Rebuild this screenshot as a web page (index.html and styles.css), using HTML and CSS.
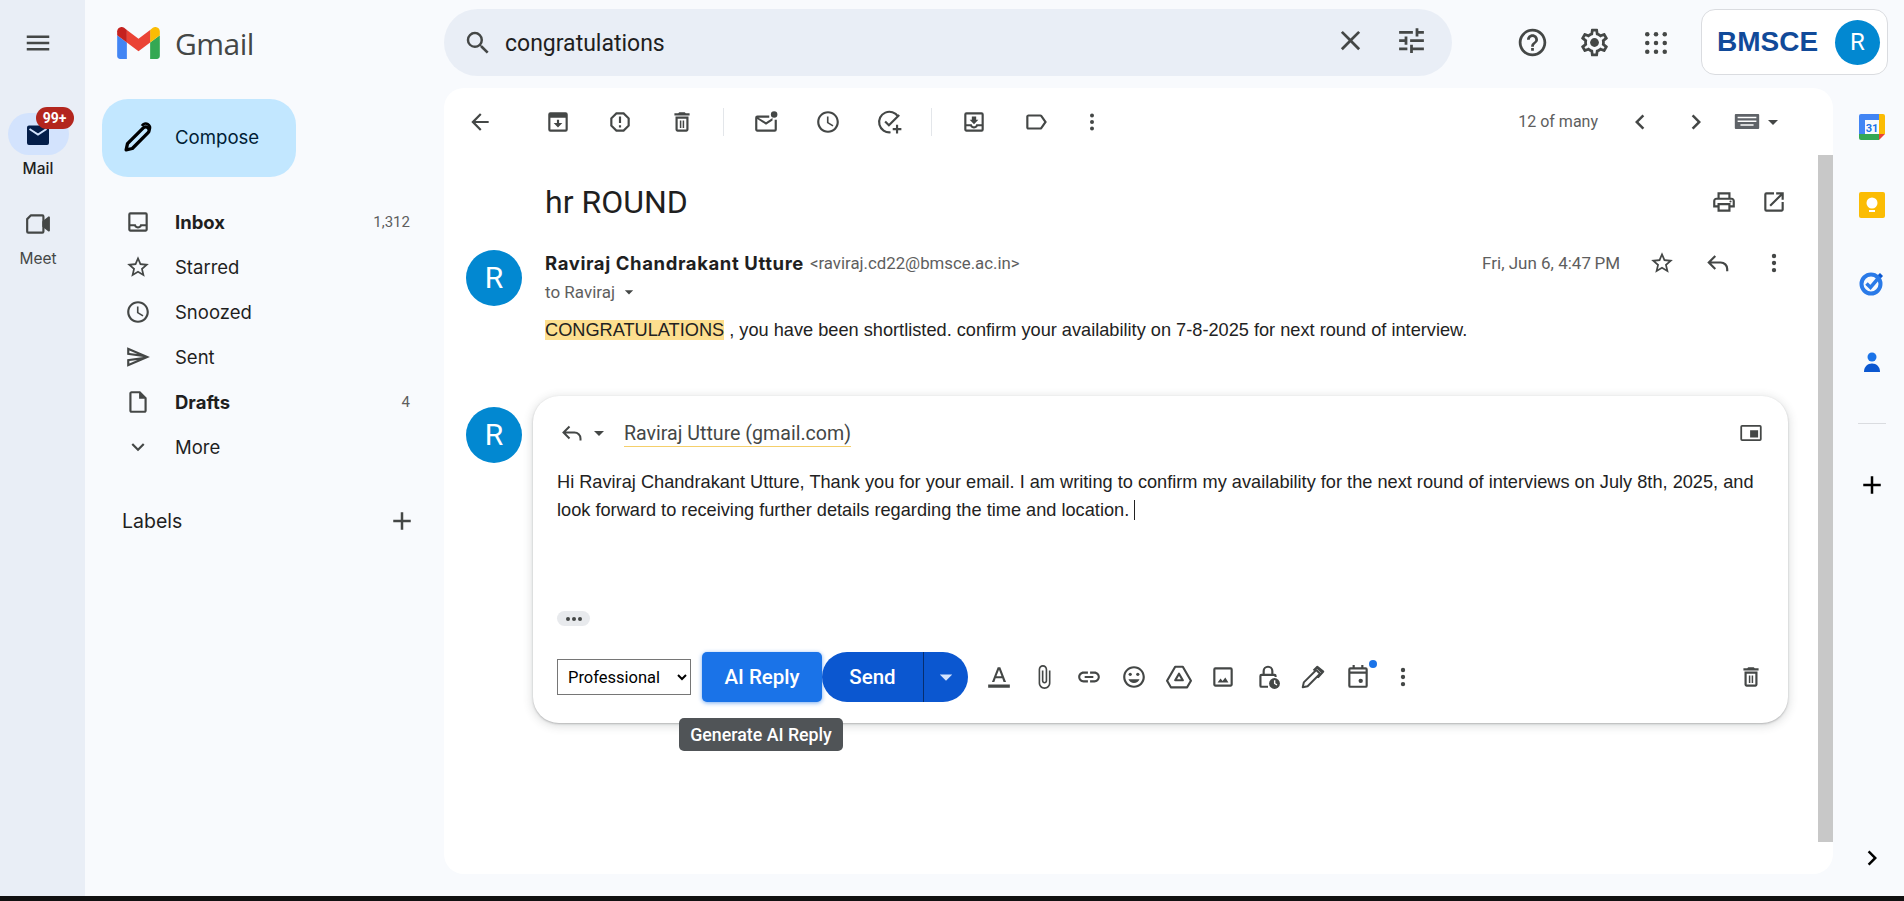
FILE: index.html
```html
<!DOCTYPE html>
<html lang="en">
<head>
    <meta charset="UTF-8">
    <title>hr ROUND - Gmail</title>
    <link rel="stylesheet" href="styles.css">
</head>
<body>
    <!-- icon sprite -->
    <svg class="sprite" xmlns="http://www.w3.org/2000/svg">
        <symbol id="i-menu" viewBox="0 0 24 24"><path d="M3 18h18v-2H3v2zm0-5h18v-2H3v2zm0-7v2h18V6H3z"/></symbol>
        <symbol id="i-search" viewBox="0 0 24 24"><path d="M15.5 14h-.79l-.28-.27A6.471 6.471 0 0 0 16 9.5 6.5 6.5 0 1 0 9.5 16c1.61 0 3.09-.59 4.23-1.57l.27.28v.79l5 4.99L20.49 19l-4.99-5zm-6 0C7.01 14 5 11.99 5 9.5S7.01 5 9.5 5 14 7.01 14 9.5 11.99 14 9.5 14z"/></symbol>
        <symbol id="i-close" viewBox="0 0 24 24"><path d="M19 6.41 17.59 5 12 10.59 6.41 5 5 6.41 10.59 12 5 17.59 6.41 19 12 13.41 17.59 19 19 17.59 13.41 12z"/></symbol>
        <symbol id="i-tune" viewBox="0 0 24 24"><path d="M3 17v2h6v-2H3zM3 5v2h10V5H3zm10 16v-2h8v-2h-8v-2h-2v6h2zM7 9v2H3v2h4v2h2V9H7zm14 4v-2H11v2h10zm-6-4h2V7h4V5h-4V3h-2v6z"/></symbol>
        <symbol id="i-help" viewBox="0 0 24 24"><path d="M11 18h2v-2h-2v2zm1-16C6.48 2 2 6.48 2 12s4.48 10 10 10 10-4.48 10-10S17.52 2 12 2zm0 18c-4.41 0-8-3.59-8-8s3.59-8 8-8 8 3.59 8 8-3.59 8-8 8zm0-14c-2.21 0-4 1.79-4 4h2c0-1.1.9-2 2-2s2 .9 2 2c0 2-3 1.75-3 5h2c0-2.25 3-2.5 3-5 0-2.21-1.79-4-4-4z"/></symbol>
        <symbol id="i-gear" viewBox="0 0 24 24"><path d="M19.43 12.98c.04-.32.07-.64.07-.98 0-.34-.03-.66-.07-.98l2.11-1.65c.19-.15.24-.42.12-.64l-2-3.46c-.09-.16-.26-.25-.44-.25-.06 0-.12.01-.17.03l-2.49 1c-.52-.4-1.08-.73-1.69-.98l-.38-2.65C14.46 2.18 14.25 2 14 2h-4c-.25 0-.46.18-.49.42l-.38 2.65c-.61.25-1.17.59-1.69.98l-2.49-1c-.06-.02-.12-.03-.18-.03-.17 0-.34.09-.43.25l-2 3.46c-.13.22-.07.49.12.64l2.11 1.65c-.04.32-.07.65-.07.98 0 .33.03.66.07.98l-2.11 1.65c-.19.15-.24.42-.12.64l2 3.46c.09.16.26.25.44.25.06 0 .12-.01.17-.03l2.49-1c.52.4 1.08.73 1.69.98l.38 2.65c.03.24.24.42.49.42h4c.25 0 .46-.18.49-.42l.38-2.65c.61-.25 1.17-.59 1.69-.98l2.49 1c.06.02.12.03.18.03.17 0 .34-.09.43-.25l2-3.46c.12-.22.07-.49-.12-.64l-2.11-1.65zm-1.98-1.71c.04.31.05.52.05.73 0 .21-.02.43-.05.73l-.14 1.13.89.7 1.08.84-.7 1.21-1.27-.51-1.04-.42-.9.68c-.43.32-.84.56-1.25.73l-1.06.43-.16 1.13-.2 1.35h-1.4l-.19-1.35-.16-1.13-1.06-.43c-.43-.18-.83-.41-1.23-.71l-.91-.7-1.06.43-1.27.51-.7-1.21 1.08-.84.89-.7-.14-1.13c-.03-.31-.05-.54-.05-.74s.02-.43.05-.73l.14-1.13-.89-.7-1.08-.84.7-1.21 1.27.51 1.04.42.9-.68c.43-.32.84-.56 1.25-.73l1.06-.43.16-1.13.2-1.35h1.39l.19 1.35.16 1.13 1.06.43c.43.18.83.41 1.23.71l.91.7 1.06-.43 1.27-.51.7 1.21-1.07.85-.89.7.14 1.13z"/><circle cx="12" cy="12" r="3.2"/></symbol>
        <symbol id="i-apps" viewBox="0 0 24 24"><circle cx="5" cy="5" r="1.800"/><circle cx="12" cy="5" r="1.800"/><circle cx="19" cy="5" r="1.800"/><circle cx="5" cy="12" r="1.800"/><circle cx="12" cy="12" r="1.800"/><circle cx="19" cy="12" r="1.800"/><circle cx="5" cy="19" r="1.800"/><circle cx="12" cy="19" r="1.800"/><circle cx="19" cy="19" r="1.800"/></symbol>
        <symbol id="i-back" viewBox="0 0 24 24"><path d="M20 11H7.83l5.59-5.59L12 4 4 12l8 8 1.41-1.41L7.83 13H20v-2z"/></symbol>
        <symbol id="i-archive" viewBox="0 0 24 24"><path d="M5 3h14a2 2 0 0 1 2 2v14a2 2 0 0 1-2 2H5a2 2 0 0 1-2-2V5a2 2 0 0 1 2-2zm0 5v11h14V8H5zm6 2h2v3h3l-4 4-4-4h3v-3z"/></symbol>
        <symbol id="i-spam" viewBox="0 0 24 24"><path d="M15.73 3H8.27L3 8.27v7.46L8.27 21h7.46L21 15.73V8.27L15.73 3zM19 14.9 14.9 19H9.1L5 14.9V9.1L9.1 5h5.8L19 9.1v5.8zM11 7h2v6h-2zM11 15h2v2h-2z"/></symbol>
        <symbol id="i-trash" viewBox="0 0 24 24"><path d="M6 19c0 1.1.9 2 2 2h8c1.1 0 2-.9 2-2V7H6v12zM8 9h8v10H8V9zm7.5-5-1-1h-5l-1 1H5v2h14V4zM10 10.500h1.400v7H10zM12.600 10.500H14v7h-1.400z"/></symbol>
        <symbol id="i-unread" viewBox="0 0 24 24"><path d="M15 6H4a2 2 0 0 0-2 2v11c0 1.100.9 2 2 2h16a2 2 0 0 0 2-2v-9h-2v9H4V9.300l8 5.200 6-3.900V8.300l-6 3.900L5 8h10z"/><circle cx="19.500" cy="5" r="3"/></symbol>
        <symbol id="i-clock" viewBox="0 0 24 24"><path d="M11.99 2C6.47 2 2 6.48 2 12s4.47 10 9.990 10C17.520 22 22 17.520 22 12S17.520 2 11.990 2zM12 20c-4.420 0-8-3.580-8-8s3.580-8 8-8 8 3.580 8 8-3.580 8-8 8zm.5-13H11v6l5.250 3.150.75-1.230-4.500-2.670z"/></symbol>
        <symbol id="i-task" viewBox="0 0 24 24" fill="none" stroke="currentColor" stroke-width="2"><path d="M19.500 7A9.500 9.500 0 1 0 12.500 21.500M7.500 11.500l3.500 3.500 9.500-9.500M18.500 14.500v8M14.500 18.500h8"/></symbol>
        <symbol id="i-move" viewBox="0 0 24 24"><path d="M19 3H5a2 2 0 0 0-2 2v14c0 1.100.9 2 2 2h14a2 2 0 0 0 2-2V5a2 2 0 0 0-2-2zm0 16H5v-3h3.560c.69 1.190 1.970 2 3.440 2s2.750-.81 3.440-2H19v3zm0-5h-4.990c0 1.100-.9 2-2 2s-2-.9-2-2H5V5h14v9zM16 10h-2V7h-4v3H8l4 4z"/></symbol>
        <symbol id="i-label" viewBox="0 0 24 24"><path d="M17.630 5.840C17.270 5.330 16.670 5 16 5L5 5.010C3.900 5.010 3 5.900 3 7v10c0 1.100.9 1.990 2 1.990L16 19c.67 0 1.270-.33 1.630-.84L22 12l-4.370-6.160zM16 17H5V7h11l3.550 5L16 17z"/></symbol>
        <symbol id="i-more" viewBox="0 0 24 24"><circle cx="12" cy="5.500" r="2"/><circle cx="12" cy="12" r="2"/><circle cx="12" cy="18.500" r="2"/></symbol>
        <symbol id="i-prev" viewBox="0 0 24 24"><path d="M15.410 7.410 14 6l-6 6 6 6 1.410-1.410L10.830 12z"/></symbol>
        <symbol id="i-next" viewBox="0 0 24 24"><path d="M10 6 8.590 7.410 13.170 12l-4.580 4.590L10 18l6-6z"/></symbol>
        <symbol id="i-caret" viewBox="0 0 24 24"><path d="M7 10l5 5 5-5z"/></symbol>
        <symbol id="i-keyboard" viewBox="0 0 26 16"><path d="M1 0h24a1 1 0 0 1 1 1v14a1 1 0 0 1-1 1H1a1 1 0 0 1-1-1V1a1 1 0 0 1 1-1zm2 3v1.500h20V3zm0 4v1.500h20V7zm3 4v1.500h14V11z"/></symbol>
        <symbol id="i-print" viewBox="0 0 24 24"><path d="M19 8h-1V3H6v5H5c-1.660 0-3 1.340-3 3v6h4v4h12v-4h4v-6c0-1.660-1.340-3-3-3zM8 5h8v3H8V5zm8 12v2H8v-4h8v2zm2-2v-2H6v2H4v-4c0-.55.45-1 1-1h14c.55 0 1 .45 1 1v4h-2z"/><circle cx="18" cy="11.500" r="1"/></symbol>
        <symbol id="i-open" viewBox="0 0 24 24"><path d="M19 19H5V5h7V3H5a2 2 0 0 0-2 2v14a2 2 0 0 0 2 2h14c1.100 0 2-.9 2-2v-7h-2v7zM14 3v2h3.590l-9.830 9.830 1.410 1.410L19 6.410V10h2V3h-7z"/></symbol>
        <symbol id="i-star" viewBox="0 0 24 24"><path d="M22 9.240l-7.190-.62L12 2 9.190 8.630 2 9.240l5.460 4.730L5.820 21 12 17.270 18.180 21l-1.630-7.030L22 9.240zM12 15.400l-3.760 2.270 1-4.280-3.320-2.880 4.380-.38L12 6.100l1.710 4.040 4.380.38-3.320 2.880 1 4.280L12 15.400z"/></symbol>
        <symbol id="i-reply" viewBox="0 0 24 24" fill="none" stroke="currentColor" stroke-width="2"><path d="M9.500 5.500L3.500 11.500l6 6M4 11.500h10.500a6 6 0 0 1 6 6v2"/></symbol>
        <symbol id="i-inbox" viewBox="0 0 24 24"><path d="M19 3H5a2 2 0 0 0-2 2v14c0 1.100.89 2 2 2h14c1.100 0 2-.9 2-2V5a2 2 0 0 0-2-2zm0 16H5v-3h3.560c.69 1.190 1.970 2 3.440 2s2.750-.81 3.440-2H19v3zm0-5h-4.990c0 1.100-.9 2-2 2s-2-.9-2-2H5V5h14v9z"/></symbol>
        <symbol id="i-send" viewBox="0 0 24 24"><path d="M4.010 6.030l7.510 3.220-7.520-1 .01-2.220m7.500 8.720L4 17.970v-2.220l7.510-1M2.010 3L2 10l15 2-15 2 .01 7L23 12 2.010 3z"/></symbol>
        <symbol id="i-draft" viewBox="0 0 24 24"><path d="M14 2H6c-1.100 0-1.990.9-1.990 2L4 20c0 1.100.89 2 1.990 2H18c1.100 0 2-.9 2-2V8l-6-6zM6 20V4h7v5h5v11H6z"/></symbol>
        <symbol id="i-down" viewBox="0 0 24 24"><path d="M16.590 8.590 12 13.170 7.410 8.590 6 10l6 6 6-6z"/></symbol>
        <symbol id="i-plus" viewBox="0 0 24 24"><path d="M19 13h-6v6h-2v-6H5v-2h6V5h2v6h6v2z"/></symbol>
        <symbol id="i-pencil" viewBox="0 0 24 24" fill="none" stroke="currentColor" stroke-width="2.400" stroke-linejoin="round"><path d="M3 21l1-4.500L15.500 5a2.300 2.300 0 0 1 3.500 3.500L7.500 20z"/><path d="M14.500 3.500a3 3 0 0 1 5.500 3" stroke-width="2"/></symbol>
        <symbol id="i-mail" viewBox="0 0 24 24"><path d="M3 3.500h18a2 2 0 0 1 2 2V21a2 2 0 0 1-2 2H3a2 2 0 0 1-2-2V5.500a2 2 0 0 1 2-2z"/><path d="M3.500 7l8.500 5.500L20.500 7" fill="none" stroke="#d3e3fd" stroke-width="2"/></symbol>
        <symbol id="i-video" viewBox="0 0 24 24" fill="none" stroke="currentColor" stroke-width="2" stroke-linejoin="round"><path d="M5.500 4H16a1 1 0 0 1 1 1v14a1 1 0 0 1-1 1H3a1 1 0 0 1-1-1V7.500z"/><path d="M17 10l5-4v12l-5-4z" fill="currentColor"/></symbol>
        <symbol id="i-format" viewBox="0 0 24 24"><path d="M2 19h20v3H2zM10.800 3h2.400l5.300 13.500h-2.300l-1.200-3.300H8.900l-1.200 3.300H5.500zm-1.200 8.300h4.700L12 5.200z"/></symbol>
        <symbol id="i-clip" viewBox="0 0 24 24"><path d="M16.500 6v11.500c0 2.210-1.790 4-4 4s-4-1.790-4-4V5c0-1.380 1.120-2.500 2.500-2.500s2.500 1.120 2.500 2.500v10.500c0 .55-.45 1-1 1s-1-.45-1-1V6H10v9.500c0 1.380 1.120 2.500 2.500 2.500s2.500-1.120 2.500-2.500V5c0-2.210-1.790-4-4-4S7 2.790 7 5v12.500c0 3.040 2.460 5.500 5.500 5.500s5.500-2.460 5.500-5.500V6h-1.500z"/></symbol>
        <symbol id="i-link" viewBox="0 0 24 24"><path d="M3.900 12c0-1.710 1.390-3.100 3.100-3.100h4V7H7c-2.760 0-5 2.240-5 5s2.240 5 5 5h4v-1.900H7c-1.710 0-3.100-1.390-3.100-3.100zM8 13h8v-2H8v2zm9-6h-4v1.900h4c1.710 0 3.100 1.390 3.100 3.100s-1.390 3.100-3.100 3.100h-4V17h4c2.760 0 5-2.240 5-5s-2.240-5-5-5z"/></symbol>
        <symbol id="i-emoji" viewBox="0 0 24 24"><path d="M11.990 2C6.470 2 2 6.480 2 12s4.470 10 9.990 10C17.520 22 22 17.520 22 12S17.520 2 11.990 2zM12 20c-4.420 0-8-3.580-8-8s3.580-8 8-8 8 3.580 8 8-3.580 8-8 8zm0-2.500c2.330 0 4.310-1.460 5.110-3.500H6.890c.8 2.040 2.780 3.500 5.110 3.500z"/><circle cx="15.500" cy="9.500" r="1.500"/><circle cx="8.500" cy="9.500" r="1.500"/></symbol>
        <symbol id="i-drive" viewBox="0 0 24 24" fill="none" stroke="currentColor" stroke-width="2" stroke-linejoin="round"><path d="M8.500 2.500h7L23 15.500 19.500 21.500H4.500L1 15.500zM12 9l3.500 6h-7z"/></symbol>
        <symbol id="i-image" viewBox="0 0 24 24"><path d="M19 5v14H5V5h14m0-2H5a2 2 0 0 0-2 2v14c0 1.100.9 2 2 2h14c1.100 0 2-.9 2-2V5a2 2 0 0 0-2-2zM14.140 12.500l-2.500 3.200-1.900-2.300L7 17h10z"/></symbol>
        <symbol id="i-lock" viewBox="0 0 24 24"><path d="M12 1.500a5 5 0 0 0-5 5V9H6a2 2 0 0 0-2 2v9a2 2 0 0 0 2 2h6v-2H6v-9h12v1h2v-1a2 2 0 0 0-2-2h-1V6.500a5 5 0 0 0-5-5zM9 6.500a3 3 0 0 1 6 0V9H9z"/><circle cx="18" cy="18" r="5"/><path d="M17.500 15h1.300v2.700l1.800 1.100-.6 1-2.500-1.500z" fill="#fff"/></symbol>
        <symbol id="i-pen" viewBox="0 0 24 24" fill="none" stroke="currentColor" stroke-width="1.800" stroke-linejoin="round"><path d="M2.500 21.500l1-4.500L15 5.500l3.500 3.500L7 20.500zM12.500 6l3.500-3.500 5.500 4.500-5 5.500M16.500 4l3.500 3.500"/></symbol>
        <symbol id="i-calendar" viewBox="0 0 24 24"><path d="M7 1h2v2h6V1h2v2h2a2 2 0 0 1 2 2v15a2 2 0 0 1-2 2H5a2 2 0 0 1-2-2V5a2 2 0 0 1 2-2h2zM5 9v11h14V9zm0-2h14V5H5z"/><circle cx="14.500" cy="15.500" r="2"/></symbol>
        <symbol id="i-pip" viewBox="0 0 24 18"><path d="M2 0h20a2 2 0 0 1 2 2v14a2 2 0 0 1-2 2H2a2 2 0 0 1-2-2V2a2 2 0 0 1 2-2zm0 2v14h20V2zm9 4h9v8h-9z"/></symbol>
    </svg>

    <div class="app">
        <!-- left rail -->
        <aside class="rail">
            <div class="rail-menu"><svg class="ico"><use href="#i-menu"/></svg></div>
            <div class="rail-item rail-item-active">
                <div class="rail-pill">
                    <svg class="ico-sm rail-mail"><use href="#i-mail"/></svg>
                    <span class="rail-badge">99+</span>
                </div>
                <span class="rail-label">Mail</span>
            </div>
            <div class="rail-item">
                <div class="rail-pill rail-pill-plain"><svg class="ico-md"><use href="#i-video"/></svg></div>
                <span class="rail-label">Meet</span>
            </div>
        </aside>

        <!-- logo -->
        <div class="brand">
            <svg class="brand-logo" viewBox="52 42 88 66">
                <path fill="#4285f4" d="M58 108h14V74L52 59v43c0 3.320 2.690 6 6 6"/>
                <path fill="#34a853" d="M120 108h14c3.320 0 6-2.690 6-6V59l-20 15"/>
                <path fill="#fbbc04" d="M120 48v26l20-15v-8c0-7.420-8.470-11.650-14.400-7.200"/>
                <path fill="#ea4335" d="M72 74V48l24 18 24-18v26L96 92"/>
                <path fill="#c5221f" d="M52 51v8l20 15V48l-5.600-4.200c-5.940-4.450-14.400-.22-14.400 7.200"/>
            </svg>
            <span class="brand-name">Gmail</span>
        </div>

        <!-- search and account -->
        <header class="topbar">
            <div class="search">
                <svg class="ico"><use href="#i-search"/></svg>
                <span class="search-text">congratulations</span>
                <svg class="ico-lg search-close"><use href="#i-close"/></svg>
                <svg class="ico-lg search-tune"><use href="#i-tune"/></svg>
            </div>
            <div class="top-actions">
                <span class="top-btn"><svg class="ico-lg"><use href="#i-help"/></svg></span>
                <span class="top-btn"><svg class="ico-lg"><use href="#i-gear"/></svg></span>
                <span class="top-btn"><svg class="ico"><use href="#i-apps"/></svg></span>
            </div>
            <div class="account">
                <span class="account-org">BMSCE</span>
                <span class="account-avatar">R</span>
            </div>
        </header>

        <!-- folders -->
        <nav class="sidebar">
            <div class="compose">
                <svg class="ico-lg"><use href="#i-pencil"/></svg>
                <span>Compose</span>
            </div>
            <ul class="folders">
                <li class="folder folder-bold"><svg class="ico-md"><use href="#i-inbox"/></svg><span>Inbox</span><em>1,312</em></li>
                <li class="folder"><svg class="ico-md"><use href="#i-star"/></svg><span>Starred</span></li>
                <li class="folder"><svg class="ico-md"><use href="#i-clock"/></svg><span>Snoozed</span></li>
                <li class="folder"><svg class="ico-md"><use href="#i-send"/></svg><span>Sent</span></li>
                <li class="folder folder-bold"><svg class="ico-md"><use href="#i-draft"/></svg><span>Drafts</span><em>4</em></li>
                <li class="folder"><svg class="ico-md"><use href="#i-down"/></svg><span>More</span></li>
            </ul>
            <div class="labels-head">
                <span>Labels</span>
                <svg class="ico"><use href="#i-plus"/></svg>
            </div>
        </nav>

        <!-- message view -->
        <main class="mail">
            <div class="toolbar">
                <span class="tool tool-back"><svg class="ico-md"><use href="#i-back"/></svg></span>
                <span class="tool"><svg class="ico-md"><use href="#i-archive"/></svg></span>
                <span class="tool"><svg class="ico-md"><use href="#i-spam"/></svg></span>
                <span class="tool"><svg class="ico-md"><use href="#i-trash"/></svg></span>
                <i class="tool-sep"></i>
                <span class="tool"><svg class="ico-md"><use href="#i-unread"/></svg></span>
                <span class="tool"><svg class="ico-md"><use href="#i-clock"/></svg></span>
                <span class="tool"><svg class="ico-md"><use href="#i-task"/></svg></span>
                <i class="tool-sep"></i>
                <span class="tool"><svg class="ico-md"><use href="#i-move"/></svg></span>
                <span class="tool"><svg class="ico-md"><use href="#i-label"/></svg></span>
                <span class="tool tool-more"><svg class="ico-sm"><use href="#i-more"/></svg></span>
                <span class="pager">12 of many</span>
                <span class="pager-btn"><svg class="ico"><use href="#i-prev"/></svg></span>
                <span class="pager-btn"><svg class="ico"><use href="#i-next"/></svg></span>
                <svg class="keyboard"><use href="#i-keyboard"/></svg>
                <svg class="ico-sm keyboard-caret"><use href="#i-caret"/></svg>
            </div>

            <div class="thread">
                <div class="subject-row">
                    <h1 class="subject">hr ROUND</h1>
                    <svg class="ico-md"><use href="#i-print"/></svg>
                    <svg class="ico-md"><use href="#i-open"/></svg>
                </div>

                <article class="message">
                    <span class="avatar">R</span>
                    <div class="message-main">
                        <div class="message-head">
                            <strong class="sender">Raviraj Chandrakant Utture</strong>
                            <span class="sender-mail">&lt;raviraj.cd22@bmsce.ac.in&gt;</span>
                            <span class="message-date">Fri, Jun 6, 4:47&#8201;PM</span>
                            <svg class="ico-md"><use href="#i-star"/></svg>
                            <svg class="ico-md"><use href="#i-reply"/></svg>
                            <svg class="ico-md"><use href="#i-more"/></svg>
                        </div>
                        <div class="message-to">to Raviraj <svg class="ico-xs"><use href="#i-caret"/></svg></div>
                        <p class="message-body"><mark>CONGRATULATIONS</mark> , you have been shortlisted. confirm your availability on 7-8-2025 for next round of interview.</p>
                    </div>
                </article>

                <section class="reply-row">
                    <span class="avatar reply-avatar">R</span>
                    <div class="reply-card">
                        <div class="reply-head">
                            <svg class="ico-sm reply-arrow"><use href="#i-reply"/></svg>
                            <svg class="ico-sm reply-caret"><use href="#i-caret"/></svg>
                            <span class="reply-to">Raviraj Utture (gmail.com)</span>
                            <svg class="reply-pip"><use href="#i-pip"/></svg>
                        </div>
                        <p class="reply-text">Hi Raviraj Chandrakant Utture, Thank you for your email. I am writing to confirm my availability for the next round of interviews on July 8th, 2025, and look forward to receiving further details regarding the time and location. <span class="text-caret"></span></p>
                        <span class="dots"><i></i><i></i><i></i></span>
                        <div class="reply-foot">
                            <select class="tone">
                                <option>Professional</option>
                            </select>
                            <button class="ai-btn">AI Reply</button>
                            <div class="send">
                                <span class="send-main">Send</span>
                                <span class="send-more"><svg class="ico"><use href="#i-caret"/></svg></span>
                            </div>
                            <div class="format-tools">
                                <span class="format-btn"><svg class="ico-md"><use href="#i-format"/></svg></span>
                                <span class="format-btn"><svg class="ico-md"><use href="#i-clip"/></svg></span>
                                <span class="format-btn"><svg class="ico-md"><use href="#i-link"/></svg></span>
                                <span class="format-btn"><svg class="ico-md"><use href="#i-emoji"/></svg></span>
                                <span class="format-btn"><svg class="ico-md"><use href="#i-drive"/></svg></span>
                                <span class="format-btn"><svg class="ico-md"><use href="#i-image"/></svg></span>
                                <span class="format-btn"><svg class="ico-md"><use href="#i-lock"/></svg></span>
                                <span class="format-btn"><svg class="ico-md"><use href="#i-pen"/></svg></span>
                                <span class="format-btn format-btn-dot"><svg class="ico-md"><use href="#i-calendar"/></svg></span>
                                <span class="format-btn"><svg class="ico-md"><use href="#i-more"/></svg></span>
                            </div>
                            <svg class="ico-md reply-delete"><use href="#i-trash"/></svg>
                            <span class="tooltip">Generate AI Reply</span>
                        </div>
                    </div>
                </section>
            </div>
            <div class="scrollbar"></div>
        </main>

        <!-- add-ons -->
        <aside class="addons">
            <svg class="addon" viewBox="0 0 26 26">
                <path fill="#4285f4" d="M2 0h18v6H6v14H0V2a2 2 0 0 1 2-2z"/>
                <path fill="#fbbc04" d="M20 0h4a2 2 0 0 1 2 2v18h-6z"/>
                <path fill="#34a853" d="M0 20h20v6H2a2 2 0 0 1-2-2z"/>
                <path fill="#ea4335" d="M20 20h6l-6 6z"/>
                <text class="addon-date" x="13" y="18" text-anchor="middle">31</text>
            </svg>
            <svg class="addon" viewBox="0 0 26 26">
                <rect width="26" height="26" rx="2" fill="#fbbc04"/>
                <circle cx="13" cy="11" r="5.500" fill="#fff"/>
                <rect x="10" y="18" width="6" height="2" fill="#fff"/>
            </svg>
            <svg class="addon" viewBox="0 0 26 26">
                <circle cx="12" cy="14" r="9.500" fill="none" stroke="#2a7ae8" stroke-width="4"/>
                <path d="M7.500 13.500l4 4L22 5" fill="none" stroke="#2a7ae8" stroke-width="3.500"/>
                <path d="M21 3l3 3-2 2-3-3z" fill="#0b57d0"/>
            </svg>
            <svg class="addon" viewBox="0 0 26 26">
                <circle cx="13" cy="9" r="4.500" fill="#1a73e8"/>
                <path d="M5 24c0-5.500 3.500-8.500 8-8.500s8 3 8 8.500z" fill="#0b57d0"/>
            </svg>
            <i class="addon-sep"></i>
            <svg class="ico addon-plus"><use href="#i-plus"/></svg>
            <svg class="ico addon-expand"><use href="#i-next"/></svg>
        </aside>
    </div>
    <div class="taskbar"></div>
</body>
</html>
```

FILE: styles.css
```css
:root {
    --page-bg: #f8fafd;
    --rail-bg: #e9eef6;
    --icon: #444746;
    --text: #1f1f1f;
    --muted: #5e5e5e;
    --sans: Roboto, "Noto Sans", sans-serif;
    --ui: Inter, Roboto, sans-serif;
    --arial: "Liberation Sans", Arial, sans-serif;
}

* {
    box-sizing: border-box;
}

html,
body {
    margin: 0;
    height: 901px;
    overflow: hidden;
    background: var(--page-bg);
    font-family: var(--sans);
    color: var(--text);
}

.sprite {
    display: none;
}

svg {
    fill: currentColor;
    flex: none;
}

.ico-lg {
    width: 33px;
    height: 33px;
    color: var(--icon);
}

.ico {
    width: 30px;
    height: 30px;
    color: var(--icon);
}

.ico-md {
    width: 26px;
    height: 26px;
    color: var(--icon);
}

.ico-sm {
    width: 24px;
    height: 24px;
    color: var(--icon);
}

.ico-xs {
    width: 20px;
    height: 20px;
    color: var(--icon);
}

.app {
    display: grid;
    grid-template-columns: 85px 359px 1fr 71px;
    grid-template-rows: 88px 1fr;
    height: 896px;
}

/* left rail */
.rail {
    grid-row: 1 / 3;
    background: var(--rail-bg);
    display: flex;
    flex-direction: column;
    align-items: center;
    padding-right: 9px;
    font-family: var(--ui);
}

.rail-menu {
    height: 113px;
    padding-top: 28px;
}

.rail-item {
    display: flex;
    flex-direction: column;
    align-items: center;
    height: 90px;
    font-size: 15.5px;
    color: #444746;
}

.rail-item-active {
    color: #1f1f1f;
    font-weight: 500;
}

.rail-pill {
    position: relative;
    width: 61px;
    height: 42px;
    border-radius: 21px;
    background: #d3e3fd;
    display: flex;
    align-items: center;
    justify-content: center;
}

.rail-pill-plain {
    background: transparent;
}

.rail-mail {
    color: #041e49;
}

.rail-badge {
    position: absolute;
    top: -6px;
    left: 28px;
    width: 38px;
    height: 22px;
    border-radius: 11px;
    background: #b3261e;
    color: #fff;
    font-family: var(--sans);
    font-size: 14px;
    font-weight: 700;
    line-height: 22px;
    text-align: center;
}

.rail-label {
    margin-top: 4px;
    line-height: 20px;
}

/* logo */
.brand {
    display: flex;
    align-items: center;
    padding: 0 0 2px 32px;
}

.brand-logo {
    width: 43px;
    height: 32px;
}

.brand-name {
    margin-left: 15px;
    font-family: "Open Sans", sans-serif;
    font-size: 30px;
    color: #444746;
    letter-spacing: -0.5px;
}

/* top bar */
.topbar {
    grid-column: 3 / 5;
    display: flex;
    align-items: flex-start;
    padding-top: 9px;
}

.search {
    width: 1008px;
    height: 67px;
    border-radius: 34px;
    background: var(--rail-bg);
    display: flex;
    align-items: center;
    padding: 0 24px 0 19px;
}

.search-text {
    margin-left: 12px;
    padding-top: 2px;
    font-size: 23px;
    color: #1f1f1f;
}

.search-close {
    margin-left: auto;
    margin-top: -5px;
}

.search-tune {
    margin-left: 28px;
    margin-top: -5px;
}

.top-actions {
    display: flex;
    margin-left: 49px;
    height: 67px;
    align-items: center;
}

.top-btn {
    width: 62px;
    display: flex;
    justify-content: center;
}

.account {
    margin-left: 14px;
    width: 187px;
    height: 66px;
    background: #fff;
    border: 1px solid #dadce0;
    border-radius: 14px;
    display: flex;
    align-items: center;
    justify-content: space-between;
    padding: 0 7px 0 15px;
}

.account-org {
    font-family: var(--arial);
    font-size: 28px;
    font-weight: 700;
    color: #114a99;
}

.account-avatar {
    width: 45px;
    height: 45px;
    border-radius: 50%;
    background: #0288d1;
    color: #fff;
    font-size: 24px;
    line-height: 45px;
    text-align: center;
}

/* sidebar */
.sidebar {
    padding-top: 11px;
    font-family: var(--ui);
}

.compose {
    margin-left: 17px;
    width: 194px;
    height: 78px;
    padding-bottom: 2px;
    border-radius: 26px;
    background: #c2e7ff;
    display: flex;
    align-items: center;
    padding-left: 20px;
    font-size: 18.6px;
    font-weight: 400;
    color: #001d35;
    gap: 20px;
}

.compose .ico-lg {
    color: #000;
}

.folders {
    list-style: none;
    margin: 22px 0 0;
    padding: 0 34px 0 40px;
}

.folder {
    display: flex;
    align-items: center;
    height: 45px;
    font-size: 18.5px;
    color: #1f1f1f;
    gap: 24px;
}

.folder-bold {
    font-weight: 700;
}

.folder em {
    margin-left: auto;
    font-family: var(--sans);
    font-style: normal;
    font-weight: 400;
    font-size: 15px;
    color: #5e5e5e;
}

.labels-head {
    display: flex;
    align-items: center;
    justify-content: space-between;
    margin-top: 29px;
    padding: 0 27px 0 37px;
    height: 45px;
    font-size: 19.5px;
}

/* message view */
.mail {
    position: relative;
    background: #fff;
    border-radius: 20px;
    margin-bottom: 22px;
}

.toolbar {
    display: flex;
    align-items: center;
    height: 67px;
    padding: 0 0 0 5px;
}

.tool {
    width: 62px;
    display: flex;
    justify-content: center;
}

.tool-back {
    margin-right: 16px;
}

.tool-sep {
    width: 1px;
    height: 28px;
    margin: 0 11px 0 10px;
    background: #e3e6ea;
}

.tool-more {
    width: 50px;
}

.pager {
    margin-left: auto;
    font-size: 16px;
    color: #5e5e5e;
}

.pager-btn {
    width: 56px;
    display: flex;
    justify-content: center;
    margin-left: 0;
}

.pager + .pager-btn {
    margin-left: 14px;
}

.keyboard {
    width: 26px;
    height: 15px;
    margin-left: 10px;
    color: #5f6368;
}

.keyboard-caret {
    margin: 0 48px 0 1px;
}

.thread {
    padding: 23px 34px 0 22px;
}

.subject-row {
    display: flex;
    align-items: center;
    height: 48px;
    padding: 0 12px 0 79px;
    gap: 24px;
}

.subject {
    margin: 0 auto 0 0;
    font-size: 32px;
    font-weight: 400;
    color: #1f1f1f;
}

.message {
    display: flex;
    margin-top: 24px;
}

.avatar {
    width: 56px;
    height: 56px;
    flex: none;
    border-radius: 50%;
    background: #0288d1;
    color: #fff;
    font-size: 30px;
    line-height: 56px;
    text-align: center;
}

.message-main {
    flex: 1;
    margin-left: 23px;
    padding-right: 12px;
}

.message-head {
    display: flex;
    align-items: center;
    height: 26px;
    gap: 30px;
}

.sender {
    font-family: var(--ui);
    font-size: 18.5px;
    font-weight: 700;
    letter-spacing: 0.6px;
    margin-right: -24px;
}

.sender-mail {
    font-size: 16.8px;
    color: #5e5e5e;
    margin-right: auto;
}

.message-date {
    font-size: 17px;
    color: #5e5e5e;
    margin-right: -1px;
}

.message-to {
    display: flex;
    align-items: center;
    gap: 4px;
    height: 26px;
    margin-top: 3px;
    font-size: 17px;
    color: #5e5e5e;
}

.message-body {
    margin: 15px 0 0;
    font-family: var(--arial);
    font-size: 18.2px;
    line-height: 20px;
    color: #222;
}

.message-body mark {
    background: #fddf8f;
    color: #222;
}

/* reply box */
.reply-row {
    display: flex;
    margin-top: 56px;
}

.reply-avatar {
    margin-top: 11px;
}

.reply-card {
    width: 1255px;
    height: 327px;
    margin-left: 11px;
    border-radius: 26px;
    background: #fff;
    box-shadow: 0 1px 2px rgba(60, 64, 67, 0.3), 0 2px 8px 2px rgba(60, 64, 67, 0.15);
    padding: 0 22px 0 24px;
}

.reply-head {
    display: flex;
    align-items: center;
    height: 73px;
}

.reply-arrow {
    margin-left: 3px;
}

.reply-caret {
    margin-left: 3px;
}

.reply-to {
    margin-left: 13px;
    padding-top: 3px;
    font-size: 19.6px;
    color: #444746;
    border-bottom: 1px solid #f5cf6b;
    line-height: 24px;
}

.reply-pip {
    width: 22px;
    height: 16px;
    margin-left: auto;
    margin-right: 4px;
    color: var(--icon);
}

.reply-text {
    margin: 0;
    font-family: var(--arial);
    font-size: 18.2px;
    line-height: 27.5px;
    color: #222;
    height: 56px;
}

.text-caret {
    display: inline-block;
    width: 1px;
    height: 20px;
    background: #222;
    vertical-align: -4px;
}

.dots {
    display: flex;
    width: 33px;
    height: 15px;
    margin-top: 86px;
    border-radius: 8px;
    background: #e8eaed;
    align-items: center;
    justify-content: center;
    gap: 2px;
}

.dots i {
    width: 4px;
    height: 4px;
    border-radius: 50%;
    background: #444746;
}

.reply-foot {
    position: relative;
    display: flex;
    align-items: center;
    height: 52px;
    margin-top: 25px;
}

.tone {
    width: 134px;
    height: 36px;
    background: #fff;
    border: 1px solid #767676;
    border-radius: 0;
    font-family: var(--sans);
    font-size: 16.5px;
    color: #000;
    padding-left: 6px;
}

.ai-btn {
    margin-left: 11px;
    width: 120px;
    height: 50px;
    border: 0;
    border-radius: 5px;
    background: #1a73e8;
    color: #fff;
    font-family: var(--sans);
    font-size: 20.5px;
    font-weight: 500;
    box-shadow: 0 1px 4px rgba(26, 115, 232, 0.6);
}

.send {
    display: flex;
    width: 146px;
    height: 50px;
    border-radius: 25px;
    overflow: hidden;
    background: #0b57d0;
    color: #fff;
    font-size: 20.5px;
    font-weight: 500;
}

.send-main {
    width: 102px;
    line-height: 50px;
    text-align: center;
    border-right: 1px solid #062e6f;
}

.send-more {
    flex: 1;
    display: flex;
    align-items: center;
    justify-content: center;
}

.send-more .ico {
    color: #d3e3fd;
}

.format-tools {
    display: flex;
    margin-left: 9px;
}

.format-btn {
    position: relative;
    width: 44.8px;
    display: flex;
    justify-content: center;
}

.format-btn-dot::after {
    content: '';
    position: absolute;
    top: -4px;
    right: 3px;
    width: 8px;
    height: 8px;
    border-radius: 50%;
    background: #1a73e8;
}

.reply-delete {
    margin-left: auto;
    margin-right: 2px;
}

.tooltip {
    position: absolute;
    left: 122px;
    top: 67px;
    width: 164px;
    height: 33px;
    border-radius: 5px;
    background: #505457;
    color: #fff;
    font-size: 17.8px;
    font-weight: 500;
    line-height: 33px;
    text-align: center;
}

.scrollbar {
    position: absolute;
    top: 67px;
    right: 0;
    width: 15px;
    height: 687px;
    background: #c8c8c8;
}

/* add-ons column */
.addons {
    display: flex;
    flex-direction: column;
    align-items: center;
    padding: 26px 0 23px 7px;
}

.addon {
    width: 26px;
    height: 26px;
    margin-bottom: 52px;
}

.addon-date {
    font-family: var(--sans);
    font-size: 11px;
    font-weight: 700;
    fill: #1a73e8;
}

.addon-sep {
    width: 28px;
    height: 1px;
    margin-top: -3px;
    background: #dadce0;
}

.addon-plus {
    margin-top: 46px;
    color: #000;
}

.addon-expand {
    margin-top: auto;
    color: #000;
}

.taskbar {
    height: 5px;
    background: #111;
}
```
